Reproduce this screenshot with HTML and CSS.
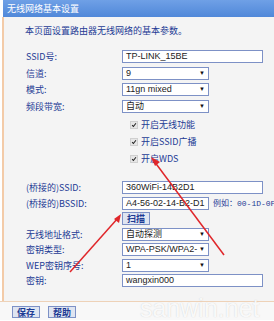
FILE: index.html
```html
<!DOCTYPE html>
<html lang="zh-CN">
<head>
    <meta charset="UTF-8">
    <title>无线网络基本设置</title>
    <link rel="stylesheet" href="styles.css">
</head>
<body>
    <div class="page">
        <div class="title">无线网络基本设置</div>
        <div class="panel">
            <p class="desc">本页面设置路由器无线网络的基本参数。</p>
            <div class="form">
                <div class="row"><span class="label">SSID号:</span><span class="field wide">TP-LINK_15BE</span></div>
                <div class="row"><span class="label">信道:</span><span class="field select">9<i>▼</i></span></div>
                <div class="row"><span class="label">模式:</span><span class="field select">11gn mixed<i>▼</i></span></div>
                <div class="row"><span class="label">频段带宽:</span><span class="field select">自动<i>▼</i></span></div>

                <div class="check"><span class="cb"><svg viewBox="0 0 8 8"><path d="M1.5 4.2 L3.2 6 L6.6 1.6" /></svg></span>开启无线功能</div>
                <div class="check"><span class="cb"><svg viewBox="0 0 8 8"><path d="M1.5 4.2 L3.2 6 L6.6 1.6" /></svg></span>开启SSID广播</div>
                <div class="check"><span class="cb"><svg viewBox="0 0 8 8"><path d="M1.5 4.2 L3.2 6 L6.6 1.6" /></svg></span>开启WDS</div>

                <div class="row small first"><span class="label">(桥接的)SSID:</span><span class="field wide">360WiFi-14B2D1</span></div>
                <div class="row small"><span class="label">(桥接的)BSSID:</span><span class="field">A4-56-02-14-B2-D1</span><span class="hint">例如：00-1D-0F</span></div>
                <div class="row small"><span class="label"></span><button class="btn">扫描</button></div>
                <div class="row small"><span class="label">无线地址格式:</span><span class="field select">自动探测<i>▼</i></span></div>
                <div class="row small"><span class="label">密钥类型:</span><span class="field select">WPA-PSK/WPA2-<i>▼</i></span></div>
                <div class="row small"><span class="label">WEP密钥序号:</span><span class="field select">1<i>▼</i></span></div>
                <div class="row small"><span class="label">密钥:</span><span class="field wide">wangxin000</span></div>
            </div>
        </div>
        <div class="bar">
            <button class="btn">保存</button>
            <button class="btn">帮助</button>
        </div>

        <svg class="arrows" width="274" height="321" viewBox="0 0 274 321">
            <line x1="224" y1="255" x2="154" y2="161" />
            <polygon points="151,157 160,162 155,166" />
            <line x1="70" y1="272" x2="118" y2="218" />
            <polygon points="121,214 119,223 114,219" />
        </svg>
        <div class="mark">sanwin.net</div>
    </div>
</body>
</html>
```

FILE: styles.css
```css
body {
    margin: 0;
    padding: 0;
    font-family: "Noto Sans CJK SC", "Liberation Sans", sans-serif;
    font-size: 9px;
    background-color: #fff;
    overflow: hidden;
}

.page {
    position: relative;
    width: 274px;
    height: 321px;
    overflow: hidden;
}

.title {
    height: 17px;
    margin-left: 3px;
    padding-left: 4px;
    line-height: 17px;
    color: #fff;
    background: linear-gradient(#6fa0e6, #5088d9);
}

.panel {
    margin-left: 2px;
    height: 284px;
    border-left: 2px solid #f3cba8;
    background-color: #f4f4f4;
    overflow: hidden;
}

.desc {
    margin: 8px 0 0 21px;
    line-height: 12px;
    color: #1d3b94;
}

.form {
    margin-top: 13px;
    padding-left: 22px;
}

.row {
    display: flex;
    align-items: flex-start;
    height: 16.5px;
    white-space: nowrap;
}

.row.small {
    height: 15.5px;
}

.row.first {
    margin-top: 14px;
}

.label {
    width: 96px;
    flex: none;
    line-height: 13px;
    color: #1d3b94;
}

.field {
    position: relative;
    box-sizing: border-box;
    width: 87px;
    height: 13px;
    padding-left: 3px;
    border: 1px solid #7d91c6;
    background-color: #fff;
    color: #222;
    font-family: "Liberation Sans", sans-serif;
    font-size: 9px;
    line-height: 11px;
    flex: none;
}

.field.wide {
    width: 141px;
}

.select {
    font-family: "Liberation Sans", "Noto Sans CJK SC", sans-serif;
}

.select i {
    position: absolute;
    right: 3px;
    top: 0;
    font-style: normal;
    font-size: 6px;
    color: #111;
}

.hint {
    margin-left: 4px;
    line-height: 13px;
    color: #1d3b94;
    font-family: "Liberation Mono", "Noto Sans CJK SC", monospace;
    font-size: 8px;
}

.check {
    display: flex;
    align-items: center;
    height: 17px;
    padding-left: 104px;
    color: #1d3b94;
}

.cb {
    display: inline-block;
    width: 8px;
    height: 8px;
    margin-right: 3px;
    background-color: #e6e6e6;
    border: 1px solid #d0d0d0;
    box-sizing: border-box;
}

.cb svg {
    display: block;
    width: 100%;
    height: 100%;
    fill: none;
    stroke: #222;
    stroke-width: 1.4;
}

.btn {
    box-sizing: border-box;
    height: 13px;
    padding: 0 4px;
    border: 1px solid #7d91c6;
    background-color: #dfe5f1;
    color: #1d3b94;
    font-family: "Noto Sans CJK SC", sans-serif;
    font-size: 9px;
    line-height: 11px;
    font-weight: bold;
    cursor: pointer;
}

.bar {
    display: flex;
    gap: 8px;
    height: 19px;
    padding: 4px 0 0 12px;
    box-sizing: border-box;
    border-top: 1px solid #eed2b8;
    background-color: #f8f8f8;
}

.bar .btn {
    width: 28px;
    height: 12px;
}

.arrows {
    position: absolute;
    left: 0;
    top: 0;
    pointer-events: none;
}

.arrows line {
    stroke: #e0262a;
    stroke-width: 1.5;
}

.arrows polygon {
    fill: #e0262a;
}

.mark {
    position: absolute;
    left: 140px;
    top: 294px;
    font-family: "Liberation Sans", sans-serif;
    font-size: 25px;
    color: rgba(255, 255, 255, 0.9);
    text-shadow: 0 0 1px rgba(160, 160, 160, 0.5);
    pointer-events: none;
}
```
